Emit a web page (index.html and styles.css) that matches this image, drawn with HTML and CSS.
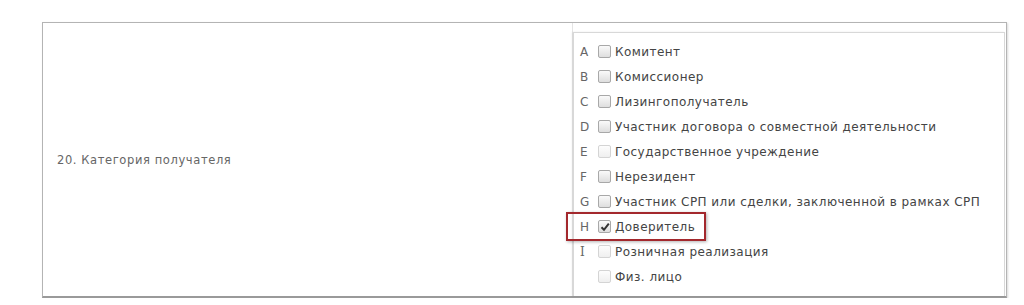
FILE: index.html
```html
<!DOCTYPE html>
<html lang="ru">
<head>
    <meta charset="UTF-8">
    <title>Категория получателя</title>
    <link rel="stylesheet" href="styles.css">
</head>
<body>
    <div class="form-row">
        <div class="field-label">20. Категория получателя</div>
        <div class="field-value">
            <ul class="options">
                <li class="option"><span class="code">A</span><span class="box"></span><span class="text">Комитент</span></li>
                <li class="option"><span class="code">B</span><span class="box"></span><span class="text">Комиссионер</span></li>
                <li class="option"><span class="code">C</span><span class="box"></span><span class="text">Лизингополучатель</span></li>
                <li class="option"><span class="code">D</span><span class="box"></span><span class="text">Участник договора о совместной деятельности</span></li>
                <li class="option"><span class="code">E</span><span class="box disabled"></span><span class="text">Государственное учреждение</span></li>
                <li class="option"><span class="code">F</span><span class="box"></span><span class="text">Нерезидент</span></li>
                <li class="option"><span class="code">G</span><span class="box"></span><span class="text">Участник СРП или сделки, заключенной в рамках СРП</span></li>
                <li class="option selected">
                    <span class="code">H</span>
                    <span class="box checked">
                        <svg width="10" height="10" viewBox="0 0 10 10"><path d="M1.5 5.2 L4 7.8 L8.8 1.6" fill="none" stroke="#333" stroke-width="2"/></svg>
                    </span>
                    <span class="text">Доверитель</span>
                    <span class="highlight"></span>
                </li>
                <li class="option"><span class="code serif">I</span><span class="box disabled"></span><span class="text">Розничная реализация</span></li>
                <li class="option"><span class="code"></span><span class="box disabled"></span><span class="text">Физ. лицо</span></li>
            </ul>
        </div>
    </div>
</body>
</html>
```

FILE: styles.css
```css
/* General Styling */
body {
    margin: 0;
    padding: 22px 0 0 42px;
    background: #fff;
    font-family: 'DejaVu Sans', Verdana, sans-serif;
    font-size: 12px;
    color: #444;
}

.form-row {
    display: flex;
    width: 963px;
    height: 273px;
    border: 1px solid #b4b4b4;
    border-bottom: 2px solid #9a9a9a;
    box-shadow: 1px 1px 2px rgba(0, 0, 0, 0.15);
}

.field-label {
    width: 530px;
    display: flex;
    align-items: center;
    padding-left: 14px;
    box-sizing: border-box;
    color: #666;
    font-size: 11.5px;
    letter-spacing: 0.6px;
    border-right: 1px solid #e4e4e4;
}

.field-value {
    flex: 1;
    padding: 9px 1px 0 0;
    display: flex;
}

.options {
    list-style: none;
    margin: 0;
    padding: 6px 0 0 6px;
    flex: 1;
    border: 1px solid #d8d8d8;
    border-bottom: none;
    box-shadow: -1px 0 2px rgba(0, 0, 0, 0.08);
}

.option {
    position: relative;
    display: flex;
    align-items: center;
    height: 25px;
}

.code {
    width: 18px;
    color: #666;
}

.code.serif {
    font-family: 'DejaVu Serif', serif;
}

.box {
    width: 11px;
    height: 11px;
    border: 1px solid #a8a8a8;
    border-radius: 2px;
    background: linear-gradient(#fafafa, #dedede);
    margin-right: 4px;
    display: flex;
    align-items: center;
    justify-content: center;
}

.box.disabled {
    border-color: #d4d4d4;
    background: linear-gradient(#fdfdfd, #efefef);
}

.text {
    white-space: nowrap;
    letter-spacing: 0.45px;
}

.highlight {
    position: absolute;
    left: -14px;
    top: -2px;
    width: 136px;
    height: 25px;
    border: 2px solid #a3282d;
    box-shadow: 1px 1px 3px rgba(0, 0, 0, 0.3);
}
```
